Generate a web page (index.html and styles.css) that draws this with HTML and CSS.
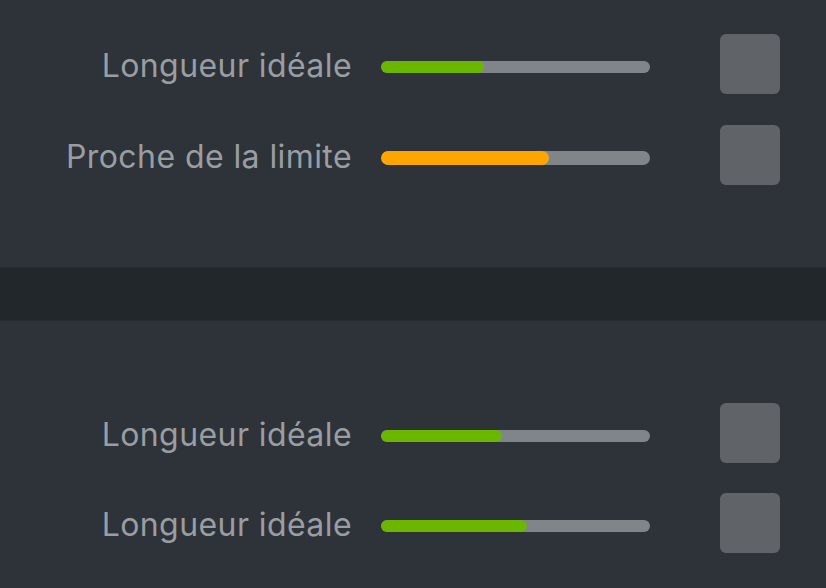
FILE: index.html
```html
<!DOCTYPE html>
<html lang="fr">
<head>
<meta charset="utf-8">
<link rel="stylesheet" href="styles.css">
</head>
<body>
<section class="panel panel-top">
  <div class="row">
    <span class="label">Longueur idéale</span>
    <div class="track"><div class="fill ok" style="width:38.3%"></div></div>
    <div class="swatch"></div>
  </div>
  <div class="row">
    <span class="label">Proche de la limite</span>
    <div class="track thick"><div class="fill warn" style="width:62.5%"></div></div>
    <div class="swatch"></div>
  </div>
</section>
<div class="divider"></div>
<section class="panel panel-bottom">
  <div class="row">
    <span class="label">Longueur idéale</span>
    <div class="track"><div class="fill ok" style="width:45%"></div></div>
    <div class="swatch"></div>
  </div>
  <div class="row">
    <span class="label">Longueur idéale</span>
    <div class="track"><div class="fill ok" style="width:54.6%"></div></div>
    <div class="swatch"></div>
  </div>
</section>
</body>
</html>
```

FILE: styles.css
```css
html, body {
  margin: 0;
  padding: 0;
  background: #2d3339;
  font-family: Inter, "Noto Sans", sans-serif;
}
body {
  width: 826px;
  height: 588px;
  overflow: hidden;
}
.panel {
  display: flex;
  flex-direction: column;
  padding-right: 46px;
  background: #2d3339;
}
.panel-top {
  height: 267px;
  box-sizing: border-box;
  padding-top: 34px;
  gap: 31px;
}
.panel-bottom {
  padding-top: 82px;
  gap: 30px;
}
.divider {
  height: 52px;
  background: #22272b;
  border-top: 1px solid #282d32;
  border-bottom: 1px solid #282d32;
}
.row {
  display: flex;
  align-items: center;
  height: 60px;
}
.label {
  width: 352px;
  text-align: right;
  font-size: 32px;
  letter-spacing: 0.42px;
  margin-right: -0.42px;
  color: #9a9ea2;
  line-height: 36px;
  margin-top: 3px;
  white-space: nowrap;
}
.track {
  width: 269px;
  height: 12px;
  margin-left: 29px;
  margin-top: 6px;
  border-radius: 6px;
  background: #80858a;
  overflow: hidden;
}
.track.thick {
  height: 14px;
  border-radius: 7px;
}
.fill {
  height: 100%;
  border-radius: 7px;
}
.fill.ok { background: #6bb700; }
.fill.warn { background: #ffa500; }
.swatch {
  margin-left: auto;
  width: 60px;
  height: 60px;
  border-radius: 6px;
  background: #606468;
}
```
